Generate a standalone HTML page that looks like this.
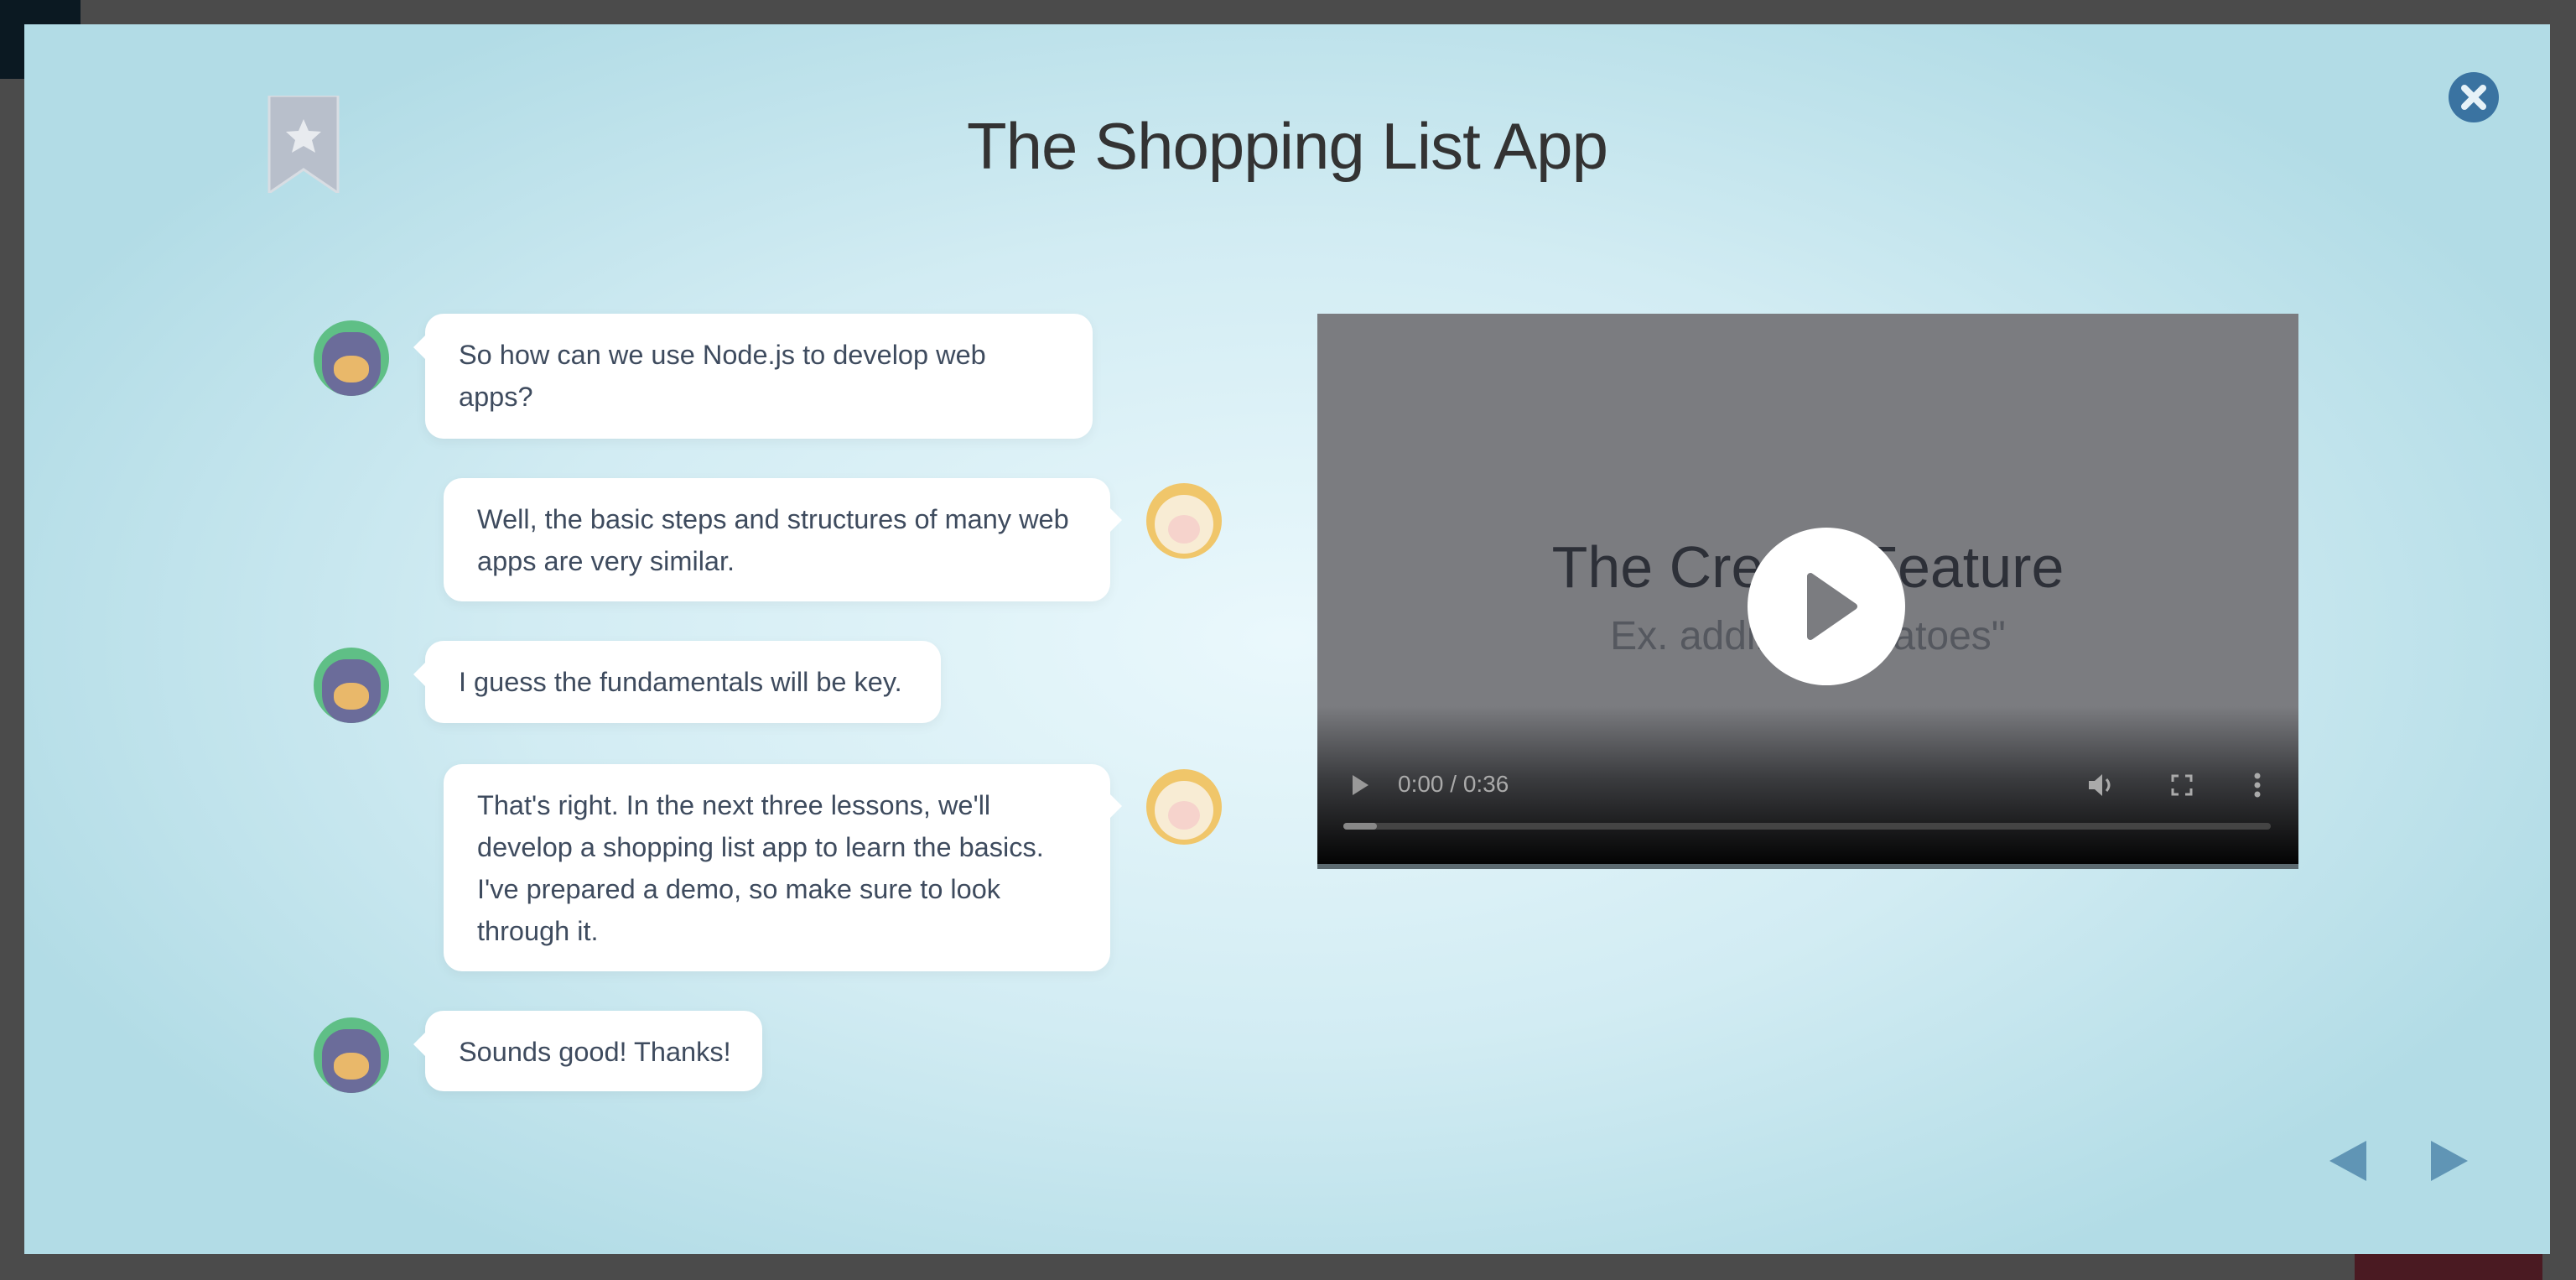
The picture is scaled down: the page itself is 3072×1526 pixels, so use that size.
<!DOCTYPE html>
<html><head><meta charset="utf-8"><style>
*{margin:0;padding:0;box-sizing:border-box}
body{width:3072px;height:1526px;background:#4b4b4b;position:relative;overflow:hidden;font-family:"Liberation Sans",sans-serif}
.modal{position:absolute;left:29px;top:29px;width:3012px;height:1466px;background:radial-gradient(ellipse 55% 60% at 50% 50%,#eaf8fc 0%,#d2ecf3 55%,#b2dce6 100%)}
.title{position:absolute;left:0;width:100%;top:100px;text-align:center;font-size:78px;color:#333;font-weight:300;letter-spacing:-1px}
.bub{position:absolute;background:#fff;border-radius:22px;font-size:32.5px;line-height:50px;color:#3e4b5e;padding:24px 40px;box-shadow:0 4px 14px rgba(0,0,0,.05);white-space:nowrap}
.bub.l:before{content:"";position:absolute;left:-14px;top:26px;border:14px solid transparent;border-right-color:#fff;border-left:0}
.bub.r:after{content:"";position:absolute;right:-14px;top:36px;border:14px solid transparent;border-left-color:#fff;border-right:0}
.av{position:absolute;width:90px;height:90px;border-radius:50%}
.cat{background:#5fbf86;overflow:hidden}
.cat:before{content:"";position:absolute;left:10px;top:14px;width:70px;height:76px;border-radius:40% 40% 45% 45%;background:#6b6c9a}
.cat:after{content:"";position:absolute;left:24px;top:42px;width:42px;height:32px;border-radius:45%;background:#e9b86a}
.sheep{background:#f0c66a;overflow:hidden}
.sheep:before{content:"";position:absolute;left:10px;top:14px;width:70px;height:70px;border-radius:50%;background:#f8ecd4}
.sheep:after{content:"";position:absolute;left:26px;top:38px;width:38px;height:34px;border-radius:50%;background:#f6d3cc}
</style></head><body>
<div style="position:absolute;left:0;top:0;width:96px;height:94px;background:#0b1922"></div>
<div style="position:absolute;left:2808px;top:1495px;width:224px;height:31px;background:#4a1a22"></div>
<div class="modal">
<svg style="position:absolute;left:290px;top:85px" width="86" height="116" viewBox="0 0 86 116"><path d="M2 0H84V116L43 88L2 116Z" fill="#b8bfcb" stroke="#d8dde3" stroke-width="3"/><path d="M43 28l6 14 15 1-11 10 4 15-14-8-14 8 4-15-11-10 15-1z" fill="#e8ebef"/></svg>
<div class="title">The Shopping List App</div>
<svg style="position:absolute;left:2891px;top:57px" width="60" height="60" viewBox="0 0 60 60"><circle cx="30" cy="30" r="30" fill="#3a73a1"/><path d="M19 19L41 41M41 19L19 41" stroke="#e6f2f8" stroke-width="8" stroke-linecap="round"/></svg>

<div class="av cat" style="left:345px;top:353px"></div>
<div class="bub l" style="left:478px;top:345px;width:796px;height:149px">So how can we use Node.js to develop web<br>apps?</div>
<div class="bub r" style="left:500px;top:541px;width:795px;height:147px">Well, the basic steps and structures of many web<br>apps are very similar.</div>
<div class="av sheep" style="left:1338px;top:547px"></div>
<div class="av cat" style="left:345px;top:743px"></div>
<div class="bub l" style="left:478px;top:735px;width:615px;height:98px">I guess the fundamentals will be key.</div>
<div class="bub r" style="left:500px;top:882px;width:795px;height:247px">That's right. In the next three lessons, we'll<br>develop a shopping list app to learn the basics.<br>I've prepared a demo, so make sure to look<br>through it.</div>
<div class="av sheep" style="left:1338px;top:888px"></div>
<div class="av cat" style="left:345px;top:1184px"></div>
<div class="bub l" style="left:478px;top:1176px;width:402px;height:96px">Sounds good! Thanks!</div>

<div style="position:absolute;left:1542px;top:345px;width:1170px;height:662px;background:#7b7c80;overflow:hidden">
<div style="position:absolute;left:0;width:100%;top:262px;text-align:center;font-size:70px;color:#2d3038">The Create Feature</div>
<div style="position:absolute;left:0;width:100%;top:357px;text-align:center;font-size:48px;color:#55585f">Ex. adding "tomatoes"</div>
<div style="position:absolute;left:0;right:0;top:468px;bottom:0;background:linear-gradient(#7b7c80,#3a3b3e 45%,#000)"></div>
<svg style="position:absolute;left:513px;top:255px" width="188" height="188" viewBox="0 0 188 188"><circle cx="94" cy="94" r="94" fill="#fff"/><path d="M75 58v72l52-36z" fill="#7b7c80" stroke="#7b7c80" stroke-width="8" stroke-linejoin="round"/></svg>
<svg style="position:absolute;left:40px;top:549px" width="22" height="26"><path d="M2 1v24l19-12z" fill="#999"/></svg>
<div style="position:absolute;left:96px;top:545px;font-size:28px;color:#aaa">0:00 / 0:36</div>
<svg style="position:absolute;left:918px;top:547px" width="34" height="30" viewBox="0 0 34 30"><path d="M2 10h7l9-8v26l-9-8H2z" fill="#aaa"/><path d="M23 8q6 7 0 14" stroke="#aaa" stroke-width="3" fill="none"/></svg>
<svg style="position:absolute;left:1018px;top:549px" width="26" height="26"><path d="M2 9V2h7M17 2h7v7M24 17v7h-7M9 24H2v-7" stroke="#aaa" stroke-width="3" fill="none"/></svg>
<svg style="position:absolute;left:1116px;top:547px" width="10" height="30"><circle cx="5" cy="4" r="3.5" fill="#aaa"/><circle cx="5" cy="15" r="3.5" fill="#aaa"/><circle cx="5" cy="26" r="3.5" fill="#aaa"/></svg>
<div style="position:absolute;left:31px;top:607px;width:1106px;height:8px;border-radius:4px;background:#444"></div>
<div style="position:absolute;left:31px;top:607px;width:40px;height:8px;border-radius:4px;background:#888"></div>
<div style="position:absolute;left:0;right:0;bottom:0;height:6px;background:#5c6a70"></div>
</div>

<svg style="position:absolute;left:2749px;top:1331px" width="44" height="48"><path d="M44 0V48L0 24z" fill="#6095b5"/></svg>
<svg style="position:absolute;left:2870px;top:1331px" width="44" height="48"><path d="M0 0V48L44 24z" fill="#6095b5"/></svg>
</div>
</body></html>
